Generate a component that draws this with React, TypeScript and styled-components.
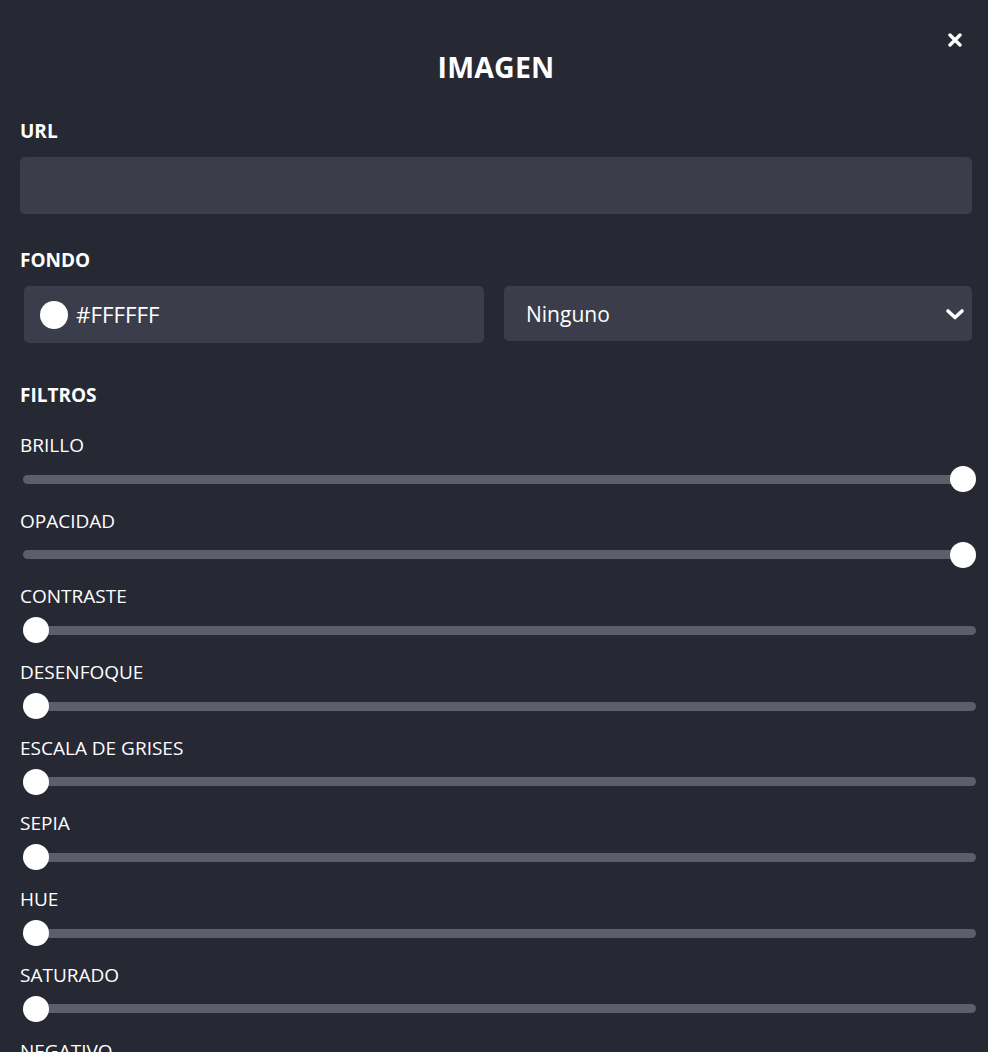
import React from "react";
import styled, { createGlobalStyle } from "styled-components";

const GlobalStyle = createGlobalStyle`
  html, body {
    margin: 0;
    padding: 0;
    background: #262833;
  }
  * {
    box-sizing: border-box;
  }
`;

const Panel = styled.div`
  width: 988px;
  min-height: 1052px;
  background: #262833;
  color: #ffffff;
  font-family: "Open Sans", "Noto Sans", sans-serif;
  padding: 26px 16px 0 20px;
`;

const Header = styled.header`
  display: grid;
  grid-template-columns: 1fr auto 1fr;
  align-items: start;
`;

const Title = styled.h1`
  grid-column: 2;
  margin: 21px 0 0;
  font-size: 28.5px;
  line-height: 40px;
  font-weight: 700;
  letter-spacing: 0.2px;
`;

const CloseButton = styled.button`
  grid-column: 3;
  justify-self: end;
  margin: 7px 10px 0 0;
  width: 14px;
  height: 14px;
  padding: 0;
  border: none;
  background: none;
  cursor: pointer;
  display: flex;
`;

const SectionLabel = styled.h2<{ $top: number }>`
  margin: ${(p) => p.$top}px 0 14px;
  font-size: 19px;
  line-height: 24px;
  font-weight: 700;
`;

const TextInput = styled.input`
  display: block;
  width: 952px;
  height: 57px;
  border: none;
  border-radius: 5px;
  background: #3b3e4a;
  color: #fff;
  font-family: inherit;
  font-size: 20px;
  padding: 0 20px;
  outline: none;
`;

const FieldRow = styled.div`
  display: grid;
  grid-template-columns: 460px 468px;
  column-gap: 20px;
  align-items: start;
  padding-left: 4px;
`;

const ColorBox = styled.div`
  height: 57px;
  border-radius: 5px;
  background: #3b3e4a;
  display: flex;
  align-items: center;
  gap: 8px;
  padding-left: 16px;
  font-size: 22.3px;
`;

const Swatch = styled.span<{ $color: string }>`
  width: 28px;
  height: 28px;
  border-radius: 50%;
  background: ${(p) => p.$color};
`;

const SelectBox = styled.div`
  height: 55px;
  border-radius: 5px;
  background: #3b3e4a;
  display: flex;
  align-items: center;
  justify-content: space-between;
  padding: 0 7px 0 22px;
  font-size: 21px;
`;

const FilterList = styled.div`
  display: flex;
  flex-direction: column;
  margin-top: 25px;
`;

const FilterItem = styled.div`
  display: flex;
  flex-direction: column;
  margin-bottom: 15.7px;
`;

const FilterLabel = styled.label`
  font-size: 19px;
  line-height: 26px;
  font-weight: 400;
  margin-bottom: 8px;
`;

const Range = styled.input`
  -webkit-appearance: none;
  appearance: none;
  width: 953px;
  height: 26px;
  margin: 0 0 0 3px;
  background: transparent;
  outline: none;

  &::-webkit-slider-runnable-track {
    height: 9px;
    border-radius: 5px;
    background: #5c5e6a;
  }

  &::-webkit-slider-thumb {
    -webkit-appearance: none;
    width: 26px;
    height: 26px;
    border-radius: 50%;
    background: #ffffff;
    border: none;
    margin-top: -8.5px;
  }
`;

const filters = [
  { name: "BRILLO", value: 100 },
  { name: "OPACIDAD", value: 100 },
  { name: "CONTRASTE", value: 0 },
  { name: "DESENFOQUE", value: 0 },
  { name: "ESCALA DE GRISES", value: 0 },
  { name: "SEPIA", value: 0 },
  { name: "HUE", value: 0 },
  { name: "SATURADO", value: 0 },
  { name: "NEGATIVO", value: 0 },
];

const App: React.FC = () => {
  return (
    <>
      <GlobalStyle />
      <Panel>
        <Header>
          <Title>IMAGEN</Title>
          <CloseButton aria-label="Cerrar">
            <svg width="14" height="14" viewBox="0 0 14 14">
              <path d="M2 2 L12 12 M12 2 L2 12" stroke="#fff" strokeWidth="3.4" strokeLinecap="round" />
            </svg>
          </CloseButton>
        </Header>

        <SectionLabel $top={32}>URL</SectionLabel>
        <TextInput type="text" />

        <SectionLabel $top={34}>FONDO</SectionLabel>
        <FieldRow>
          <ColorBox>
            <Swatch $color="#ffffff" />
            #FFFFFF
          </ColorBox>
          <SelectBox>
            Ninguno
            <svg width="20" height="14" viewBox="0 0 20 14">
              <path d="M3 4 L10 10.5 L17 4" fill="none" stroke="#fff" strokeWidth="3.6" strokeLinecap="round" strokeLinejoin="round" />
            </svg>
          </SelectBox>
        </FieldRow>

        <SectionLabel $top={40}>FILTROS</SectionLabel>
        <FilterList>
          {filters.map((f) => (
            <FilterItem key={f.name}>
              <FilterLabel>{f.name}</FilterLabel>
              <Range type="range" min={0} max={100} defaultValue={f.value} />
            </FilterItem>
          ))}
        </FilterList>
      </Panel>
    </>
  );
};

export default App;
